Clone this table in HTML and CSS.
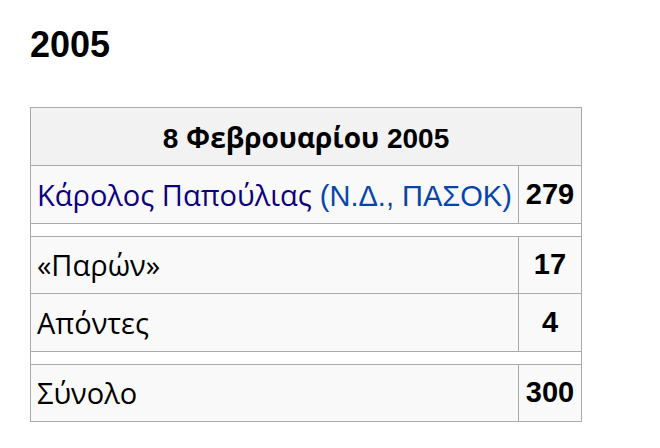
FILE: index.html
```html
<!DOCTYPE html>
<html lang="el">
<head>
<meta charset="utf-8">
<link rel="stylesheet" href="styles.css">
</head>
<body>
<div class="page">
  <h2 class="year">2005</h2>
  <table class="wikitable">
    <tr>
      <th colspan="2" class="head">8 <span class="gr">Φεβρουαρίου</span> 2005</th>
    </tr>
    <tr>
      <td class="name"><a class="visited gr" href="#">Κάρολος Παπούλιας</a> <span class="party">(<a href="#">Ν.Δ.</a>, <a href="#">ΠΑΣΟΚ</a>)</span></td>
      <td class="num">279</td>
    </tr>
    <tr class="sep"><td colspan="2"></td></tr>
    <tr>
      <td class="name gr">«Παρών»</td>
      <td class="num">17</td>
    </tr>
    <tr>
      <td class="name gr">Απόντες</td>
      <td class="num">4</td>
    </tr>
    <tr class="sep"><td colspan="2"></td></tr>
    <tr>
      <td class="name gr">Σύνολο</td>
      <td class="num">300</td>
    </tr>
  </table>
</div>
</body>
</html>
```
FILE: styles.css
```css
html, body {
  margin: 0;
  padding: 0;
  background: #ffffff;
}

.page {
  padding: 24px 30px;
  font-family: "Liberation Sans", Arial, sans-serif;
  color: #000;
}

.year {
  margin: 0 0 42px;
  font: 700 36px/41px "Liberation Sans", Arial, sans-serif;
}

.gr {
  font-family: "Open Sans", "Noto Sans", sans-serif;
}

.wikitable {
  border-collapse: collapse;
  background: #f9f9f9;
  width: 552px;
  font-size: 29px;
}

.wikitable th,
.wikitable td {
  border: 1px solid #aaaaaa;
  padding: 0 6px;
  height: 56.5px;
  vertical-align: middle;
}

.wikitable th.head {
  background: #f2f2f2;
  font-size: 28px;
  font-weight: 700;
  text-align: center;
  height: 57px;
}

.wikitable td.name {
  text-align: left;
}

.wikitable td.num {
  width: 50px;
  text-align: center;
  font-weight: 700;
}

.wikitable tr.sep td {
  background: #ffffff;
  height: 12px;
  padding: 0;
}

.wikitable a {
  color: #0645ad;
  text-decoration: none;
}

.wikitable a.visited {
  color: #0b0080;
}

.party {
  color: #0645ad;
}
```
